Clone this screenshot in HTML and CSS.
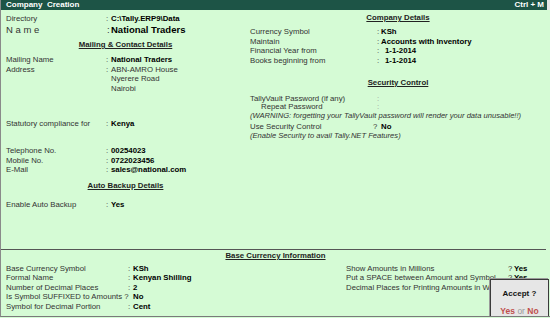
FILE: index.html
```html
<!DOCTYPE html>
<html lang="en">
<head>
    <meta charset="UTF-8" />
    <title>Company Creation</title>
    <link rel="stylesheet" href="styles.css">
</head>
<body>

    <div class="screen">

        <div class="titlebar">
            <span>Company&nbsp;&nbsp;Creation</span>
            <span class="shortcut">Ctrl + M</span>
            <span class="corner"></span>
        </div>

        <div class="main">

            <!-- Left column: directory, name and contact details -->
            <div class="col-left">
                <div class="row">
                    <span class="lbl">Directory</span><span class="sep">:</span><span class="val">C:\Tally.ERP9\Data</span>
                </div>
                <div class="row row-lg">
                    <span class="lbl">N a m e</span><span class="sep">:</span><span class="val">National Traders</span>
                </div>

                <h3 class="heading mailing-head">Mailing &amp; Contact Details</h3>

                <div class="block mailing">
                    <div class="row">
                        <span class="lbl">Mailing Name</span><span class="sep">:</span><span class="val">National Traders</span>
                    </div>
                    <div class="row">
                        <span class="lbl">Address</span><span class="sep">:</span><span class="val plain">ABN-AMRO House</span>
                    </div>
                    <div class="row">
                        <span class="lbl"></span><span class="sep"></span><span class="val plain">Nyerere Road</span>
                    </div>
                    <div class="row">
                        <span class="lbl"></span><span class="sep"></span><span class="val plain">Nairobi</span>
                    </div>
                </div>

                <div class="row statutory">
                    <span class="lbl">Statutory compliance for</span><span class="sep">:</span><span class="val">Kenya</span>
                </div>

                <div class="block phones">
                    <div class="row">
                        <span class="lbl">Telephone No.</span><span class="sep">:</span><span class="val">00254023</span>
                    </div>
                    <div class="row">
                        <span class="lbl">Mobile No.</span><span class="sep">:</span><span class="val">0722023456</span>
                    </div>
                    <div class="row">
                        <span class="lbl">E-Mail</span><span class="sep">:</span><span class="val">sales@national.com</span>
                    </div>
                </div>

                <h3 class="heading backup-head">Auto Backup Details</h3>

                <div class="row backup">
                    <span class="lbl">Enable Auto Backup</span><span class="sep">:</span><span class="val">Yes</span>
                </div>
            </div>

            <!-- Right column: company details and security -->
            <div class="col-right">
                <h3 class="heading">Company Details</h3>

                <div class="block company">
                    <div class="row">
                        <span class="lbl">Currency Symbol</span><span class="sep">:</span><span class="val">KSh</span>
                    </div>
                    <div class="row">
                        <span class="lbl">Maintain</span><span class="sep">:</span><span class="val">Accounts with Inventory</span>
                    </div>
                    <div class="row">
                        <span class="lbl">Financial Year from</span><span class="sep">:</span><span class="val date">1-1-2014</span>
                    </div>
                    <div class="row">
                        <span class="lbl">Books beginning from</span><span class="sep">:</span><span class="val date">1-1-2014</span>
                    </div>
                </div>

                <h3 class="heading security-head">Security Control</h3>

                <div class="block security">
                    <div class="row tight">
                        <span class="lbl">TallyVault Password (if any)</span><span class="sep faint">:</span>
                    </div>
                    <div class="row tighter">
                        <span class="lbl indent">Repeat Password</span><span class="sep faint">:</span>
                    </div>
                    <p class="note">(WARNING: forgetting your TallyVault password will render your data unusable!!)</p>
                    <div class="row use-security">
                        <span class="lbl short">Use Security Control</span><span class="ask">?</span><span class="val">No</span>
                    </div>
                    <p class="note">(Enable Security to avail Tally.NET Features)</p>
                </div>
            </div>

        </div>

        <div class="base">
            <h3 class="heading">Base Currency Information</h3>

            <div class="base-cols">
                <div class="base-left">
                    <div class="row">
                        <span class="lbl">Base Currency Symbol</span><span class="sep">:</span><span class="val">KSh</span>
                    </div>
                    <div class="row">
                        <span class="lbl">Formal Name</span><span class="sep">:</span><span class="val">Kenyan Shilling</span>
                    </div>
                    <div class="row">
                        <span class="lbl">Number of Decimal Places</span><span class="sep">:</span><span class="val">2</span>
                    </div>
                    <div class="row">
                        <span class="lbl wide">Is Symbol SUFFIXED to Amounts ?</span><span class="val">No</span>
                    </div>
                    <div class="row">
                        <span class="lbl">Symbol for Decimal Portion</span><span class="sep">:</span><span class="val">Cent</span>
                    </div>
                </div>

                <div class="base-right">
                    <div class="row">
                        <span class="lbl">Show Amounts in Millions</span><span class="ask">?</span><span class="val">Yes</span>
                    </div>
                    <div class="row">
                        <span class="lbl">Put a SPACE between Amount and Symbol</span><span class="ask">?</span><span class="val">Yes</span>
                    </div>
                    <div class="row">
                        <span class="lbl cut">Decimal Places for Printing Amounts in Words</span>
                    </div>
                </div>
            </div>
        </div>

        <!-- Accept prompt sits over the bottom right corner -->
        <div class="accept">
            <div class="accept-q">Accept ?</div>
            <div class="accept-a"><b>Yes</b> or <b>No</b></div>
        </div>

    </div>

</body>
</html>
```

FILE: styles.css
```css
body {
    margin: 0;
    font-family: "Liberation Sans", Arial, sans-serif;
    font-size: 7.8px;
    color: #333;
    background: #d5fbd5;
}

.screen {
    position: relative;
    width: 549px;
    height: 316px;
    background: #d5fbd5;
    border-left: 1px solid #8a8a8a;
    border-bottom: 1px solid #7a7a7a;
    overflow: hidden;
}

.titlebar {
    display: flex;
    align-items: center;
    height: 10px;
    padding-left: 5px;
    background: #1d5446;
    color: #fff;
    font-weight: bold;
    font-size: 8px;
    line-height: 10px;
}

    .titlebar .shortcut {
        margin-left: auto;
        margin-right: 3px;
    }

    .titlebar .corner {
        width: 3px;
        height: 10px;
        background: #e8e8e8;
    }

.main {
    display: grid;
    grid-template-columns: 249px 1fr;
    height: 239px;
    border-bottom: 1px solid #555;
    margin-right: 4px;
}

.col-left {
    padding: 4px 0 0 5px;
}

.col-right {
    padding-top: 3px;
}

.row {
    display: flex;
    line-height: 9.5px;
    white-space: nowrap;
}

.lbl {
    flex: none;
    width: 100px;
}

.sep {
    flex: none;
    width: 5px;
}

.val {
    font-weight: bold;
    color: #000;
}

    .val.plain {
        font-weight: normal;
        color: #333;
    }

    .val.date {
        padding-left: 4px;
    }

.row-lg {
    font-size: 9.5px;
    line-height: 12px;
}

    .row-lg .sep {
        padding-left: 1px;
        width: 4px;
    }

.heading {
    margin: 0;
    font-size: 7.8px;
    line-height: 9.5px;
    font-weight: bold;
    color: #222;
    text-align: center;
    text-decoration: underline;
    text-underline-offset: 1px;
}

.mailing-head {
    margin-top: 4.5px;
    padding-right: 5px;
}

.mailing {
    margin-top: 5.5px;
}

.statutory {
    margin-top: 26px;
}

.phones {
    margin-top: 17.5px;
}

.backup-head {
    margin-top: 6.5px;
    padding-right: 5px;
}

.backup {
    margin-top: 9.5px;
}

/* right column */
.col-right .lbl {
    width: 127px;
}

.col-right .sep {
    width: 4px;
}

.company {
    margin-top: 4.5px;
}

.security-head {
    margin-top: 12.5px;
}

.security {
    margin-top: 6.5px;
}

.row.tight {
    line-height: 9px;
}

.row.tighter {
    line-height: 8px;
}

.lbl.indent {
    width: 116px;
    padding-left: 11px;
}

.sep.faint {
    color: #999;
}

.note {
    margin: 0;
    font-size: 7.6px;
    line-height: 9px;
    font-style: italic;
    color: #333;
    white-space: nowrap;
}

.use-security {
    margin-top: 2px;
}

    .use-security .lbl.short {
        width: 123px;
    }

.ask {
    flex: none;
    width: 8px;
}

/* base currency section */
.base {
    padding-top: 0.5px;
}

.base-cols {
    display: grid;
    grid-template-columns: 345px 1fr;
    margin-top: 3.5px;
}

.base-left {
    padding-left: 5px;
}

    .base-left .lbl {
        width: 122px;
    }

        .base-left .lbl.wide {
            width: 127px;
        }

.base-right .lbl {
    width: 162px;
    overflow: hidden;
}

    .base-right .lbl.cut {
        width: 145px;
    }

.base-right .ask {
    width: 6px;
}

.accept {
    position: absolute;
    left: 489px;
    top: 279px;
    width: 57px;
    height: 40px;
    background: #e6e6e6;
    border: 1px solid #3a3a3a;
    box-shadow: -1px -1px 0 #9a9a9a;
    text-align: center;
}

.accept-q {
    margin-top: 9px;
    font-weight: bold;
    font-size: 8px;
    line-height: 10px;
    color: #111;
}

.accept-a {
    margin-top: 7px;
    font-size: 8.5px;
    line-height: 10px;
    color: #999;
}

    .accept-a b {
        color: #c0504d;
    }
```
